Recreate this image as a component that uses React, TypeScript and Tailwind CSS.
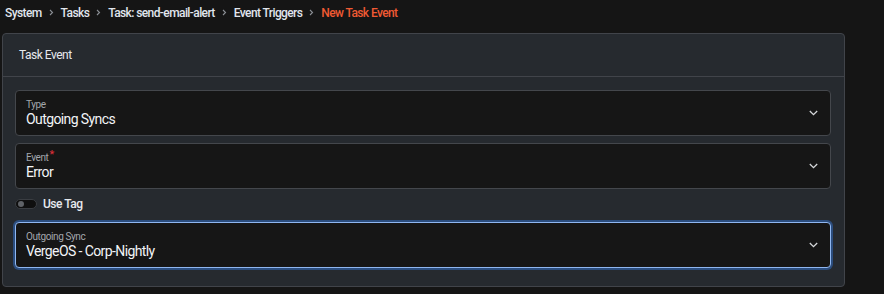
import React from "react";

const Chevron = () => (
  <svg width="9" height="6" viewBox="0 0 9 6" fill="none" className="shrink-0">
    <path d="M0.8 1l3.7 3.7L8.2 1" stroke="#d6d8db" strokeWidth="1.3" />
  </svg>
);

const Sep = () => (
  <svg width="5" height="7" viewBox="0 0 5 7" fill="none" className="mx-[7px]">
    <path d="M1 1l2.5 2.5L1 6" stroke="#8c9096" strokeWidth="1.1" />
  </svg>
);

function Field({
  label,
  value,
  required,
  focused,
}: {
  label: string;
  value: string;
  required?: boolean;
  focused?: boolean;
}) {
  return (
    <div
      className={
        "h-[46px] rounded-[4px] bg-[#161616] flex items-start pl-[10px] pr-[12px] pt-[8px] " +
        (focused
          ? "border border-[#8fb6f0] shadow-[0_0_0_2px_#2b4d7e]"
          : "border border-[#44474c]")
      }
    >
      <div className="flex-1 flex flex-col">
        <div className="text-[10px] leading-[12px] text-[#a3a7ad] tracking-[-0.4px]">
          {label}
          {required && (
            <span className="text-[#e0303a] text-[11px] relative top-[-3px] ml-[1px]">*</span>
          )}
        </div>
        <div className="text-[14px] leading-[16px] text-[#f2f4f7] tracking-[-0.6px]">{value}</div>
      </div>
      <div className="self-stretch flex items-center pb-[8px]">
        <Chevron />
      </div>
    </div>
  );
}

export default function App() {
  return (
    <div
      className="w-[884px] h-[294px] bg-[#151515] overflow-hidden"
      style={{ fontFamily: "Roboto, 'Liberation Sans', sans-serif" }}
    >
      <div className="h-[25px] flex items-center pl-[5px] text-[12px] font-medium text-[#e1e6ee] tracking-[-0.6px]">
        <span>System</span>
        <Sep />
        <span>Tasks</span>
        <Sep />
        <span>Task: send-email-alert</span>
        <Sep />
        <span>Event Triggers</span>
        <Sep />
        <span className="text-[#f05a33]">New Task Event</span>
      </div>
      <div className="ml-[2px] mt-[8px] w-[843px] rounded-[4px] border border-[#41444a] bg-[#262a2f]">
        <div className="h-[43px] flex items-center pl-[16px] text-[12px] text-[#e6e9ee] tracking-[-0.5px] border-b border-[#41444a]">
          Task Event
        </div>
        <div className="pl-[12px] pr-[13px] pt-[13px] pb-[18px] flex flex-col">
          <Field label="Type" value="Outgoing Syncs" />
          <div className="h-[7px]" />
          <Field label="Event" value="Error" required />
          <div className="h-[26px] flex items-center mt-[2px] mb-[5px]">
            <div className="w-[22px] h-[10px] rounded-full bg-[#0f0f0f] border border-[#3a3d42] relative">
              <div className="absolute left-[2px] top-[1px] w-[6px] h-[6px] rounded-full bg-[#5f6267]" />
            </div>
            <span className="ml-[6px] text-[12px] font-medium text-[#e6e9ee] tracking-[-0.5px]">
              Use Tag
            </span>
          </div>
          <Field label="Outgoing Sync" value="VergeOS - Corp-Nightly" focused />
        </div>
      </div>
    </div>
  );
}
